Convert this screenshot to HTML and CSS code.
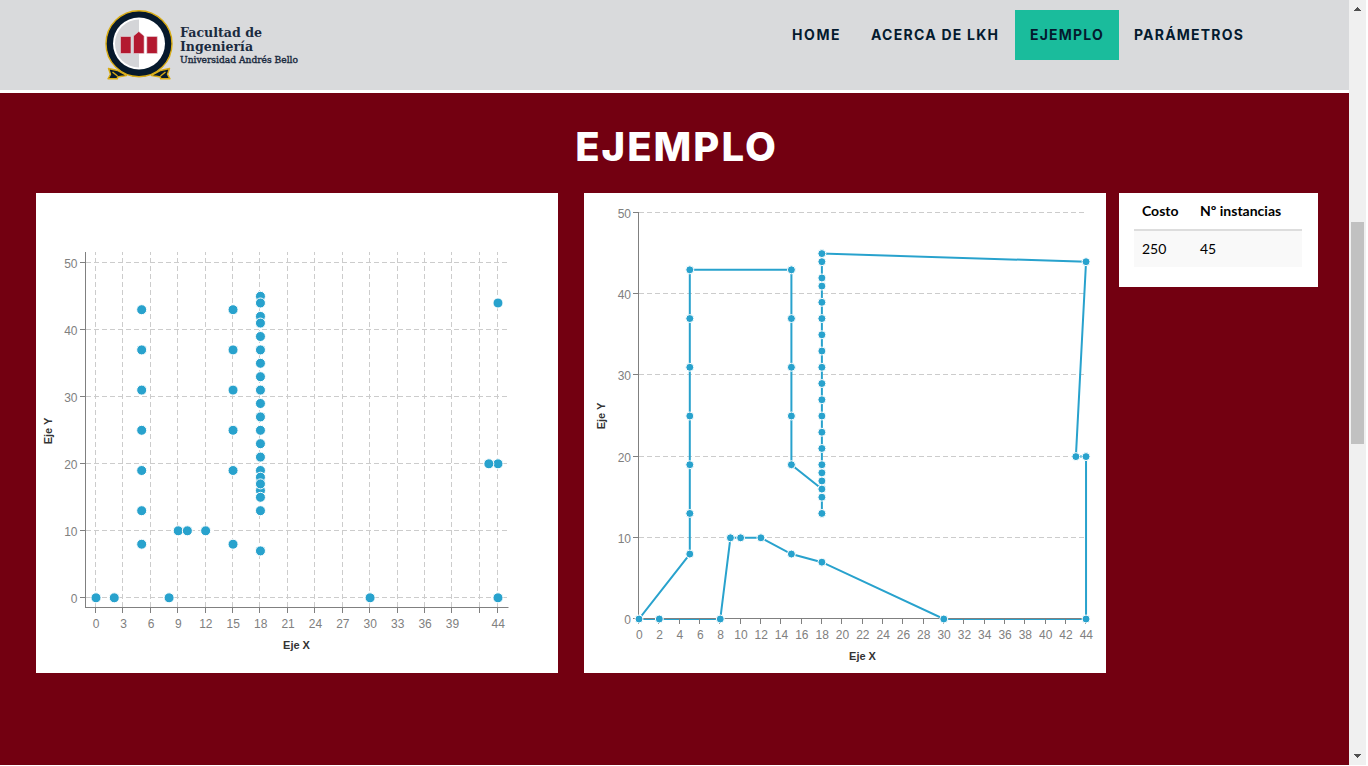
FILE: index.html
```html
<!DOCTYPE html>
<html lang="es">
<head>
<meta charset="utf-8">
<title>LKH - Ejemplo</title>
<link rel="stylesheet" href="styles.css">
</head>
<body>
<div class="window">
  <div class="page">
    <header class="header">
      <svg class="logo" width="200" height="76" viewBox="102 6 200 76">
        <g fill="#06192c" stroke="#d9ac14" stroke-width="1.400" stroke-linejoin="round">
          <path d="M108.500 68.500l9 2 9 5-9 1.500v1.800h-9.500l2.500-4.500zM169.500 68.500l-9 2-9 5 9 1.500v1.800h9.500l-2.500-4.500z"/>
          <path d="M117.500 76l-5-4M160.500 76l5-4" fill="none"/>
          <circle cx="139" cy="43.700" r="33"/>
        </g>
        <circle cx="139" cy="43.500" r="26" fill="#fff"/>
        <path d="M139 19.500a24 24 0 0 0 0 48z" fill="#d4d5d8"/>
        <path d="M120.500 36.500h10.500v17h-10.500zM133.500 53.500v-17.500l5.300-4.500 5.300 4.500v17.500zM146.800 36.500h10.500v17h-10.500z" fill="#b31930" stroke="#e4d9dd" stroke-width=".6"/>
        <g class="logo-text">
          <text x="180" y="37" font-size="13.500" textLength="82" lengthAdjust="spacingAndGlyphs">Facultad de</text>
          <text x="180" y="50.500" font-size="13.500" textLength="73" lengthAdjust="spacingAndGlyphs">Ingeniería</text>
          <text class="logo-small" x="180" y="62.500" font-size="9.500" textLength="118" lengthAdjust="spacingAndGlyphs">Universidad Andrés Bello</text>
        </g>
      </svg>
      <nav class="nav">
        <a class="nav-item nav-home">HOME</a>
        <a class="nav-item nav-about">ACERCA DE LKH</a>
        <a class="nav-item nav-example active">EJEMPLO</a>
        <a class="nav-item nav-params">PARÁMETROS</a>
      </nav>
    </header>
    <main class="section">
      <h2 class="title">EJEMPLO</h2>
      <div class="columns">
        <div class="card chart"><svg id="scatter" width="522" height="480" viewBox="36 193 522 480"></svg></div>
        <div class="card chart"><svg id="tour" width="522" height="480" viewBox="584 193 522 480"></svg></div>
        <div class="card results">
          <table class="table">
            <thead><tr><th class="col-cost">Costo</th><th>Nº instancias</th></tr></thead>
            <tbody><tr><td>250</td><td>45</td></tr></tbody>
          </table>
        </div>
      </div>
    </main>
  </div>
  <div class="scrollbar">
    <svg width="17" height="17"><path d="M8 7h1v1h1v1h1v1h1v1H5v-1h1v-1h1v-1h1z" fill="#505050"/></svg>
    <div class="track"><div class="thumb"></div></div>
    <svg width="17" height="17"><path d="M5 6h7v1h-1v1h-1v1H9v1H8v-1H7V8H6V7H5z" fill="#505050"/></svg>
  </div>
</div>
<script src="charts.js"></script>
</body>
</html>
```
FILE: styles.css
```css
* { box-sizing: border-box; }
body { margin: 0; background: #fff; overflow: hidden; font-family: Lato, sans-serif; }
.window { display: flex; width: 1366px; height: 765px; }
.page { width: 1349px; display: flex; flex-direction: column; }
.header {
  height: 93px;
  padding: 6px 91px 0 102px;
  display: flex;
  justify-content: space-between;
  align-items: flex-start;
  background: #d9dadc;
  border-bottom: 3px solid #fff;
}
.logo-text { font-family: "DejaVu Serif", serif; font-weight: bold; fill: #1b2b40; }
.logo-small { font-weight: normal; stroke: #1b2b40; stroke-width: .4px; }
.nav { display: flex; padding-top: 4px; }
.nav-item {
  height: 50px;
  padding-left: 15px;
  line-height: 50px;
  white-space: nowrap;
  font-family: Inter, sans-serif;
  font-size: 14px;
  font-weight: 700;
  letter-spacing: 1.2px;
  color: #041a2e;
}
.nav-home { width: 79px; letter-spacing: 1.6px; }
.nav-about { width: 159px; letter-spacing: 1.25px; }
.nav-example { width: 104px; }
.nav-params { width: 139px; }
.active { background: #1abc9c; }
.section { flex: 1; background: #730011; padding-top: 29px; }
.title {
  margin: 0 0 23px;
  height: 48px;
  line-height: 49px;
  padding-left: 4px;
  text-align: center;
  font-family: Inter, sans-serif;
  font-size: 40px;
  font-weight: 800;
  letter-spacing: 2px;
  color: #fff;
}
.columns { display: flex; align-items: flex-start; padding-left: 36px; }
.card { background: #fff; }
.chart { width: 522px; height: 480px; margin-right: 26px; }
.chart + .chart { margin-right: 13px; }
.chart svg { display: block; }
.results { width: 199px; height: 94px; padding: 0 16px 0 15px; }
.table { width: 100%; border-collapse: collapse; table-layout: fixed; font-size: 14px; line-height: 20px; color: #000; }
.table th { height: 37px; padding: 0 8px; text-align: left; border-bottom: 2px solid #ddd; white-space: nowrap; }
.table td { height: 37px; padding: 0 8px 1px; background: #f9f9f9; }
.col-cost { width: 58px; }
.grid { stroke: #ccc; stroke-dasharray: 5 3; fill: none; }
.axis { stroke: #808080; fill: none; }
.label { font: 12px "Liberation Sans", Arial, sans-serif; fill: #808080; }
.axis-title { font: bold 11px "Liberation Sans", Arial, sans-serif; fill: #333; text-anchor: middle; }
.center { text-anchor: middle; }
.end { text-anchor: end; }
.dot { fill: #28a2cd; stroke: #fff; }
.route { fill: none; stroke: #28a2cd; stroke-width: 2; }
.scrollbar { width: 17px; display: flex; flex-direction: column; background: #f0f0f0; }
.scrollbar svg { display: block; }
.track { flex: 1; padding: 205px 2px 0; }
.thumb { height: 222px; background: #c1c1c1; }
```
FILE: charts.js
```js
const range = (n, step) => Array.from({ length: n }, (_, i) => i * step);
const line = (cls, d) => `<path class="${cls}" d="${d}"/>`;
const text = (cls, x, y, s, extra = "") => `<text class="${cls}" x="${x}" y="${y}" ${extra}>${s}</text>`;
const snap = v => Math.floor(v) + 0.5;
const at = (x, ys) => ys.map(y => [x, y]);

function drawScatter() {
  const X = v => 96 + 9.136 * v, Y = v => 597.8 - 6.7 * v;
  const tickX = v => snap(95.3 + 9.145 * v);
  let out = "";
  const ticks = [...range(15, 3), 44];
  for (const v of ticks) out += line("grid", `M${tickX(v)} 607V252`);
  for (const v of range(6, 10)) {
    const y = snap(Y(v));
    out += line("grid", `M86 ${y}H508`) + line("axis", `M80 ${y}H85`) + text("label end", 77.5, y + 5, v);
  }
  out += line("axis", "M85.5 252V607.5M85 607.5H508.5");
  for (const v of ticks) {
    out += line("axis", `M${tickX(v)} 608V613`);
    if (v !== 42) out += text("label center", X(v) + 0.2, 628, v);
  }
  const points = [
    ...at(0, [0]), ...at(2, [0]), ...at(8, [0]), ...at(30, [0]), ...at(44, [0, 20, 44]), ...at(43, [20]),
    ...at(9, [10]), ...at(10, [10]), ...at(12, [10]),
    ...at(5, [8, 13, 19, 25, 31, 37, 43]), ...at(15, [8, 19, 25, 31, 37, 43]),
    ...at(18, [7, 13, 16, 19, 18, 17, 15, 21, 23, 25, 27, 29, 31, 33, 35, 37, 39, 42, 41, 45, 44])
  ];
  for (const [x, y] of points) out += `<circle class="dot" cx="${X(x)}" cy="${Y(y)}" r="5"/>`;
  out += text("axis-title", 296.5, 649, "Eje X");
  out += text("axis-title", 0, 0, "Eje Y", 'transform="translate(52 431) rotate(-90)"');
  document.getElementById("scatter").innerHTML = out;
}

function drawTour() {
  const X = v => 639 + 10.16 * v, Y = v => 619 - 8.12 * v;
  let out = "";
  for (const v of range(6, 10)) {
    const y = snap(618.7 - 8.13 * v);
    if (v) out += line("grid", `M639 ${y}H1084`);
    out += line("axis", `M633 ${y}H638`) + text("label end", 631, y + 5, v);
  }
  const route = [
    ...at(18, [13, 15, 16, 17, 18, 19, 21, 23, 25, 27, 29, 31, 33, 35, 37, 39, 41, 42, 44, 45]),
    [44, 44], [43, 20], [44, 20], [44, 0], [30, 0], [18, 7], [15, 8], [12, 10], [10, 10], [9, 10],
    [8, 0], [2, 0], [0, 0], ...at(5, [8, 13, 19, 25, 31, 37, 43]), ...at(15, [43, 37, 31, 25, 19]), [18, 16]
  ];
  out += line("route", "M" + route.map(([x, y]) => `${X(x)} ${Y(y)}`).join("L"));
  out += line("axis", "M638.5 212V618.5H1086");
  for (const v of range(23, 2)) {
    out += line("axis", `M${snap(X(v) - 0.4)} 619V624`) + text("label center", X(v) + 0.3, 639, v);
  }
  for (const [x, y] of route) out += `<circle class="dot" cx="${X(x)}" cy="${Y(y)}" r="4"/>`;
  out += text("axis-title", 862.5, 660, "Eje X");
  out += text("axis-title", 0, 0, "Eje Y", 'transform="translate(605 416) rotate(-90)"');
  document.getElementById("tour").innerHTML = out;
}

drawScatter();
drawTour();
```
